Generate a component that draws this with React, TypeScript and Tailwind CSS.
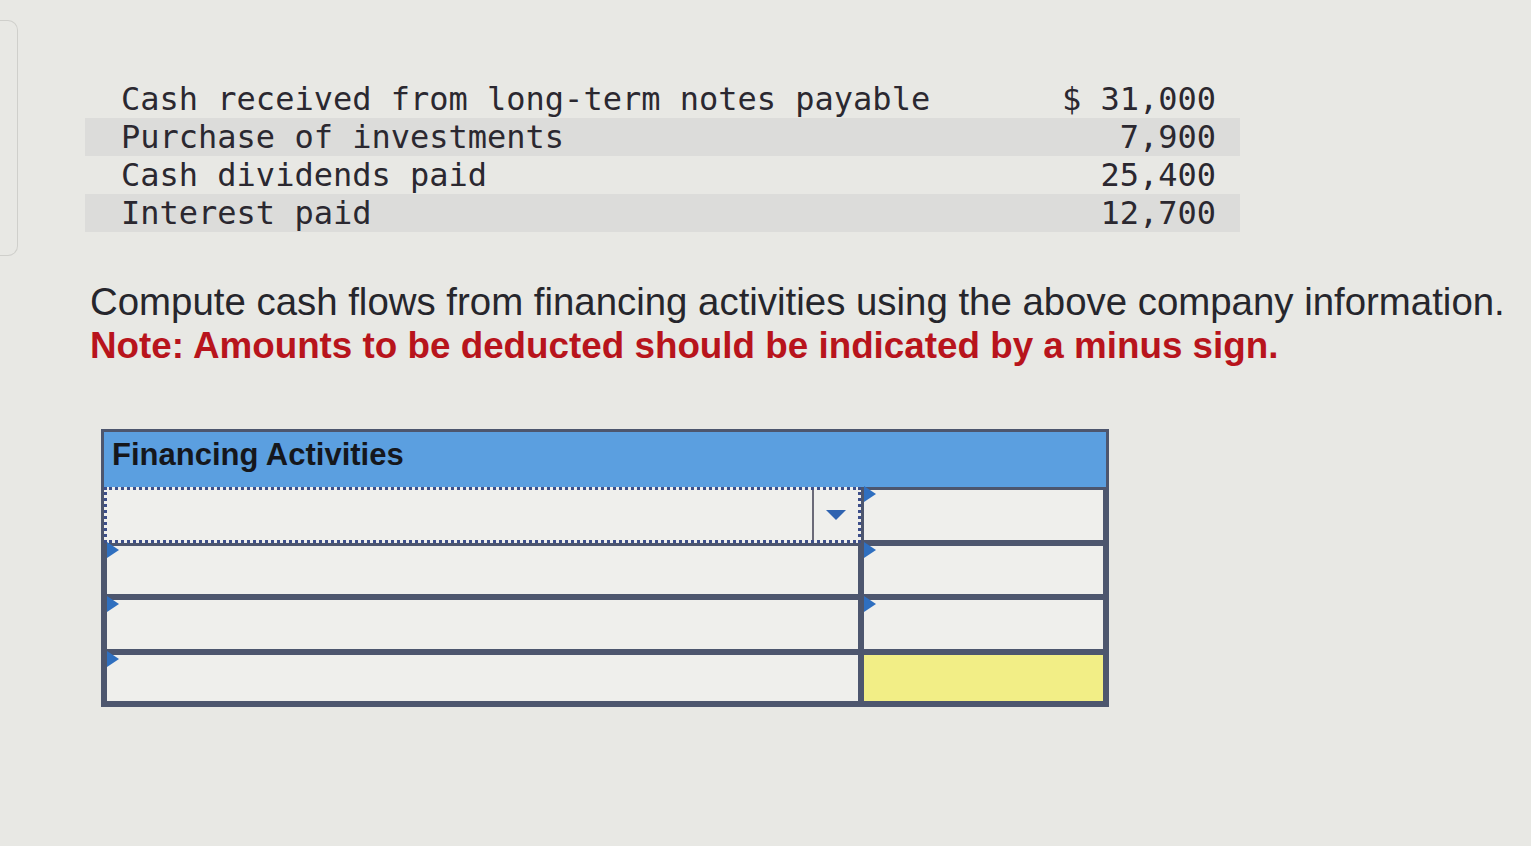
const rows = [
  { label: 'Cash received from long-term notes payable', amount: '$ 31,000', shaded: false },
  { label: 'Purchase of investments', amount: '7,900', shaded: true },
  { label: 'Cash dividends paid', amount: '25,400', shaded: false },
  { label: 'Interest paid', amount: '12,700', shaded: true },
];

const Marker = () => (
  <svg className="absolute left-0 top-[-4px]" width="13" height="16" viewBox="0 0 13 16">
    <path d="M0 0 L12 8 L0 16 Z" fill="#2f6fbf" />
  </svg>
);

const Cell = ({ marker = true, yellow = false }: { marker?: boolean; yellow?: boolean }) => (
  <div className={`relative h-full border-[3px] border-[#4d566e] ${yellow ? 'bg-[#f2ee86]' : 'bg-[#efefec]'}`}>
    {marker && <Marker />}
  </div>
);

export default function App() {
  return (
    <div className="min-h-[846px] w-[1531px] bg-[#e8e8e4] font-['Liberation_Sans',Arial,sans-serif] text-[#1f1f24] overflow-hidden">
      <div className="flex">
        <div className="mt-5 h-[236px] w-[18px] rounded-r-[10px] border border-l-0 border-[#cfcfcb]" />
        <div className="ml-[67px] mt-[80px] w-[1155px] font-['DejaVu_Sans_Mono',monospace] text-[32px] leading-[38px] text-[#2b2830]">
          {rows.map(r => (
            <div key={r.label} className={`flex justify-between pl-9 pr-6 ${r.shaded ? 'bg-[#dcdcda]' : ''}`}>
              <span className="whitespace-pre">{r.label}</span>
              <span className="whitespace-pre">{r.amount}</span>
            </div>
          ))}
        </div>
      </div>

      <div className="ml-[90px] mt-[24px] leading-[44px]">
        <p className="text-[38.4px] text-[#26262c]">Compute cash flows from financing activities using the above company information.</p>
        <p className="text-[36.8px] font-bold text-[#b8141c]">Note: Amounts to be deducted should be indicated by a minus sign.</p>
      </div>

      <div className="ml-[101px] mt-[61px] w-[1008px] border-[3px] border-[#4d566e] bg-[#efefec]">
        <div className="h-[55px] bg-[#5b9fe0] px-2 pt-[3px] text-[31px] font-bold leading-[40px] text-[#15171c]">
          Financing Activities
        </div>
        <div className="grid grid-cols-[757px_1fr] grid-rows-[56px_54px_55px_52px]">
          <div className="relative flex h-full border-[3px] border-dotted border-[#3d4f8a] bg-[#efefec]">
            <div className="flex-1" />
            <div className="flex w-[46px] items-center justify-center border-l-2 border-[#6b6a78]">
              <svg width="20" height="10" viewBox="0 0 20 10">
                <path d="M0 0 L20 0 L10 10 Z" fill="#2f63b0" />
              </svg>
            </div>
          </div>
          <Cell />
          <Cell />
          <Cell />
          <Cell />
          <Cell />
          <Cell />
          <Cell marker={false} yellow />
        </div>
      </div>
    </div>
  );
}
